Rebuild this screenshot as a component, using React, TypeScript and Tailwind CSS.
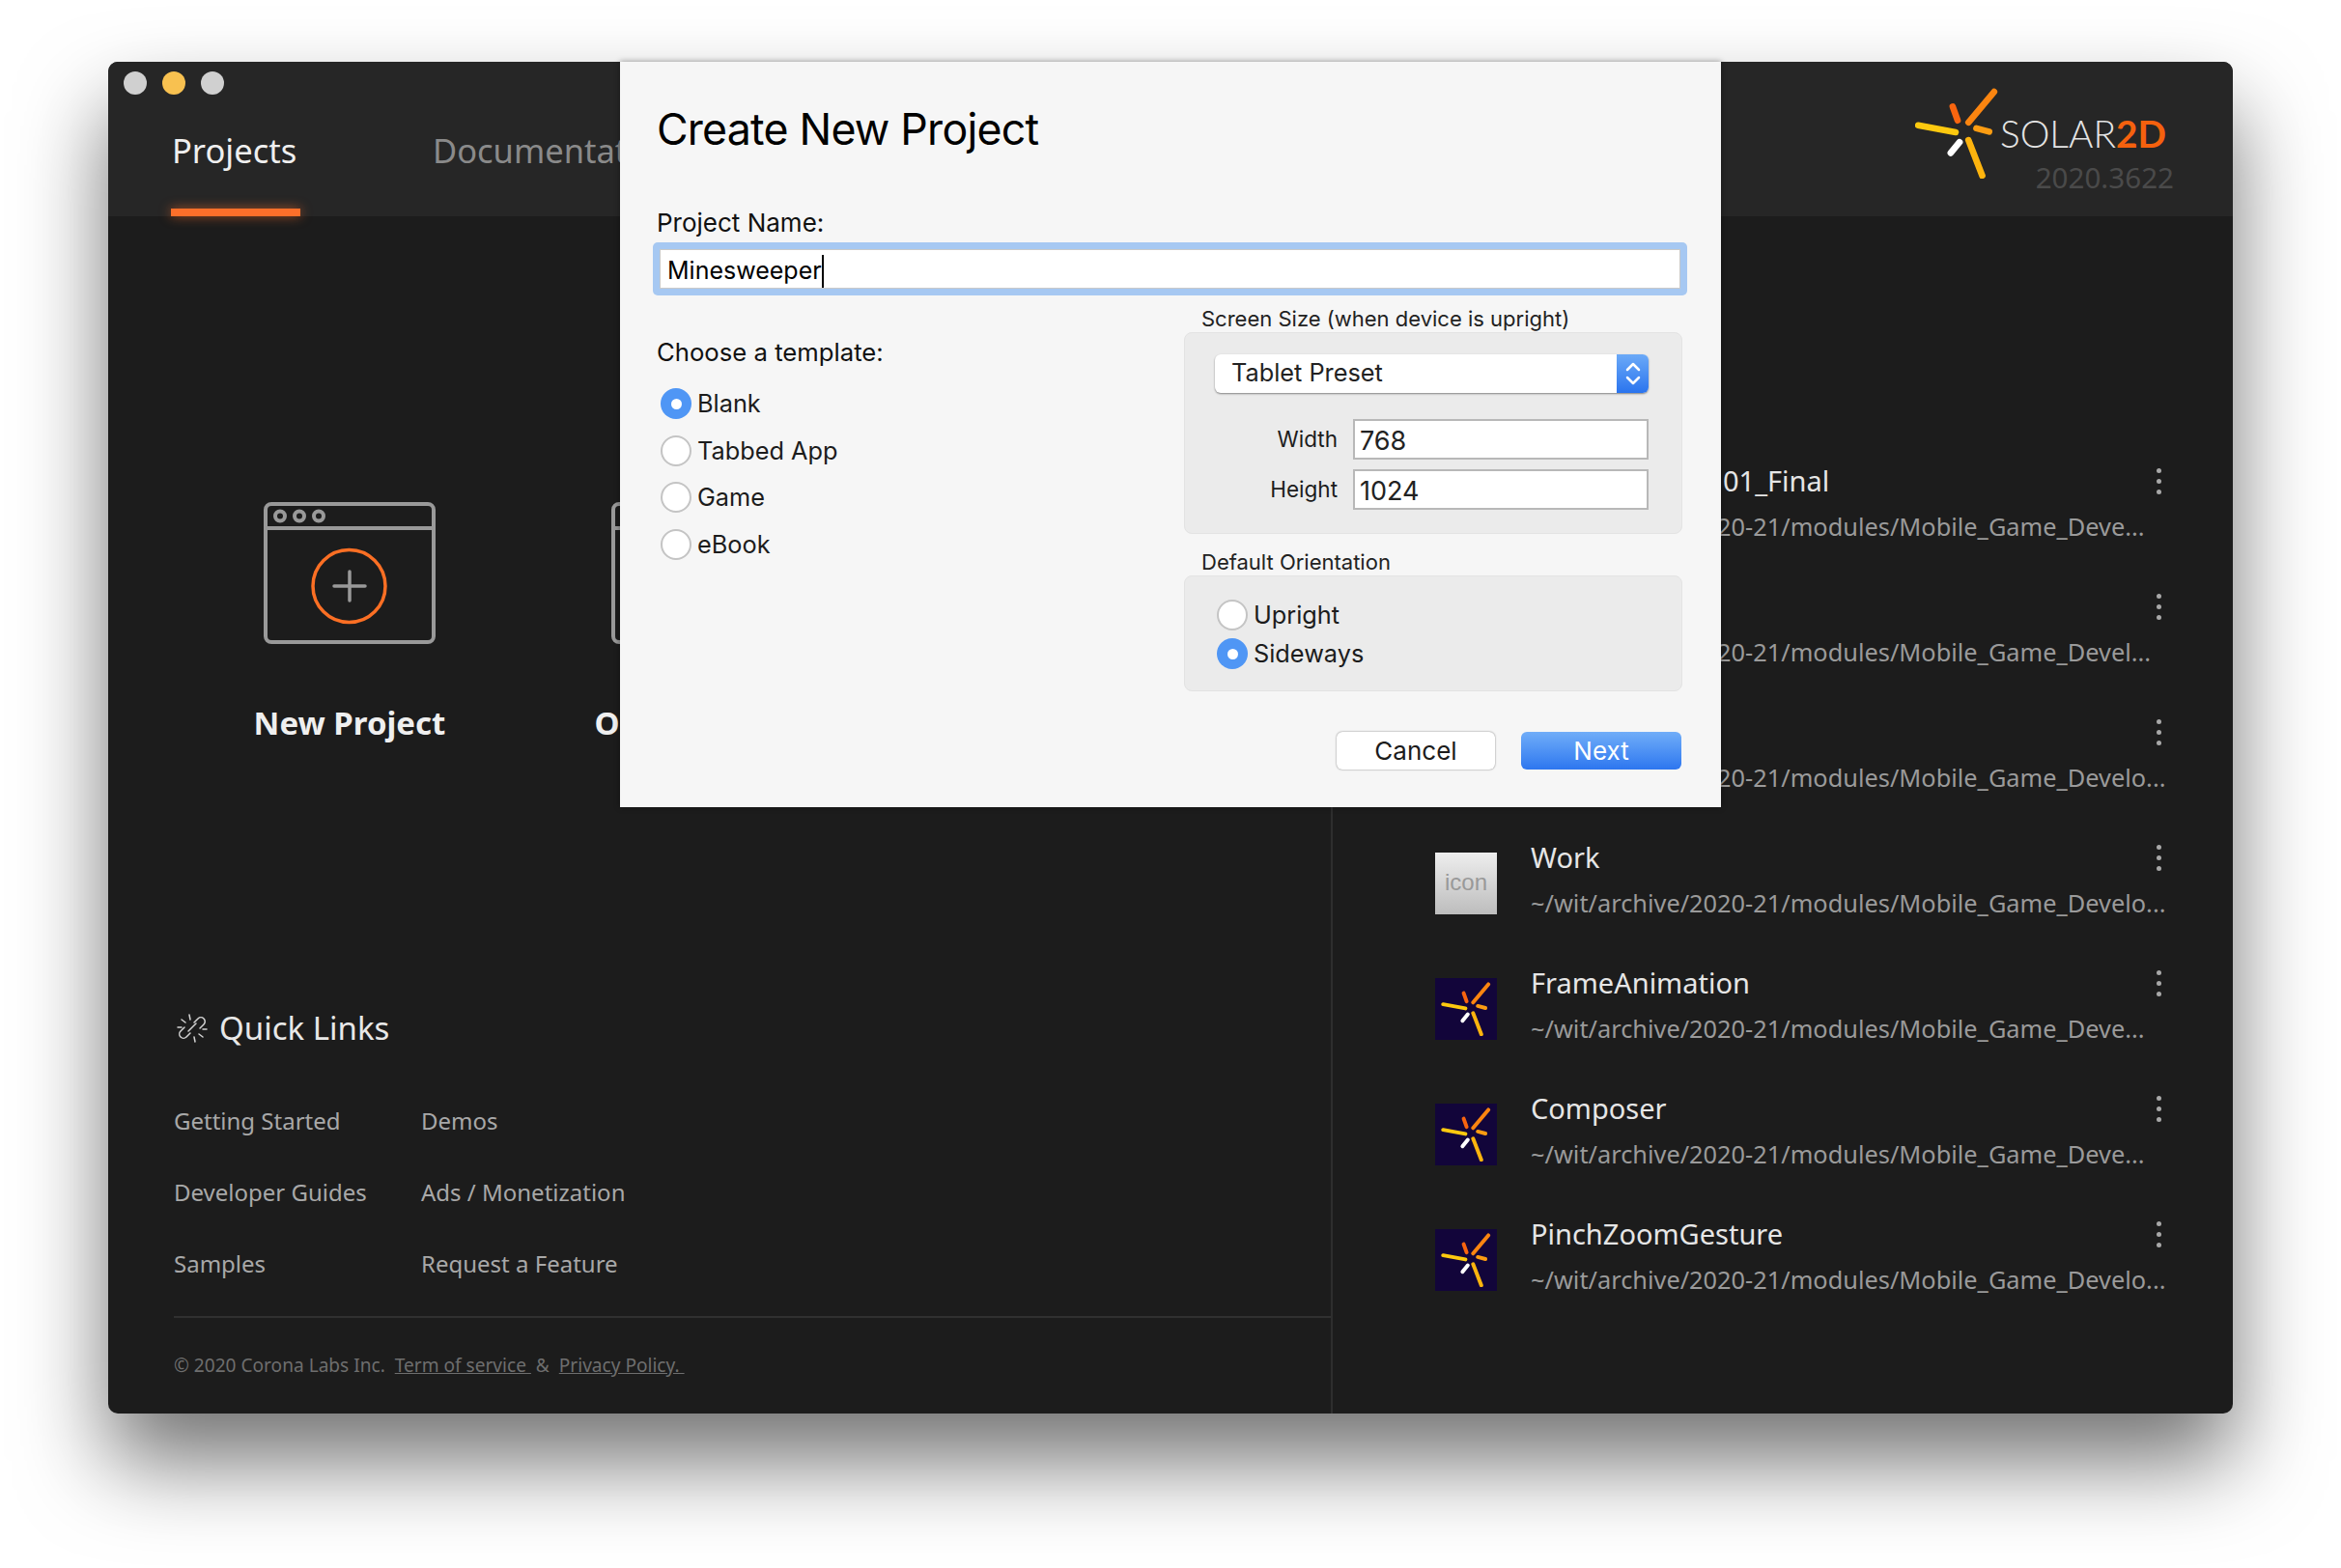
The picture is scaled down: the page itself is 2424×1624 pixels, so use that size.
import React from "react";

const uiFont = "font-['Noto_Sans',sans-serif]";
const macFont = "font-['Inter','Liberation_Sans',sans-serif]";

const projects = [
  { name: "01_Final", offset: true, path: "~/wit/archive/2020-21/modules/Mobile_Game_Deve...", icon: "solar" },
  { name: "", path: "~/wit/archive/2020-21/modules/Mobile_Game_Devel...", icon: "solar" },
  { name: "", path: "~/wit/archive/2020-21/modules/Mobile_Game_Develo...", icon: "solar" },
  { name: "Work", path: "~/wit/archive/2020-21/modules/Mobile_Game_Develo...", icon: "plain" },
  { name: "FrameAnimation", path: "~/wit/archive/2020-21/modules/Mobile_Game_Deve...", icon: "solar" },
  { name: "Composer", path: "~/wit/archive/2020-21/modules/Mobile_Game_Deve...", icon: "solar" },
  { name: "PinchZoomGesture", path: "~/wit/archive/2020-21/modules/Mobile_Game_Develo...", icon: "solar" },
];

function SolarMark({ className }: { className?: string }) {
  return (
    <svg viewBox="0 0 84 92" className={className} fill="none" strokeLinecap="round" strokeWidth="6.5">
      <path d="M80 4 54 35" stroke="#fb8510" />
      <path d="M38 19l5 14" stroke="#f9650f" />
      <path d="M3 38l38 7" stroke="#fdc90f" />
      <path d="M62 41l13 3.4" stroke="#fb9c12" />
      <path d="M45 55l-9 11" stroke="#ffffff" />
      <path d="M54 53l14 36" stroke="#fdb40e" />
    </svg>
  );
}

function WindowIcon({ plus }: { plus?: boolean }) {
  return (
    <svg width="178" height="147" viewBox="0 0 178 147" fill="none" stroke="#999" strokeWidth="4">
      <rect x="2" y="2" width="174" height="143" rx="6" />
      <path d="M2 27h174" />
      <circle cx="17" cy="14.5" r="5" />
      <circle cx="37" cy="14.5" r="5" />
      <circle cx="57" cy="14.5" r="5" />
      {plus && <circle cx="88.500" cy="87" r="37.500" stroke="#fb6f24" strokeWidth="3.500" />}
      {plus && <path d="M89 72v30M73 87h32" strokeWidth="3.500" strokeLinecap="round" />}
    </svg>
  );
}

function Radio({ checked }: { checked?: boolean }) {
  return checked ? (
    <span className="flex h-[32px] w-[32px] items-center justify-center rounded-full bg-[#4f96f5]">
      <span className="h-[11px] w-[11px] rounded-full bg-white" />
    </span>
  ) : (
    <span className="h-[32px] w-[32px] rounded-full border-2 border-[#c4c4c4] bg-white" />
  );
}

function RadioRow({ label, checked }: { label: string; checked?: boolean }) {
  return (
    <div className="flex items-center gap-[6px] text-[25.300px] leading-[32px] text-[#1c1c1c]">
      <Radio checked={checked} />
      <span>{label}</span>
    </div>
  );
}

function SizeField({ label, value }: { label: string; value: string }) {
  return (
    <div className="flex items-center">
      <span className="w-[128px] pr-[16px] text-right text-[22.500px] text-[#1c1c1c]">{label}</span>
      <div className="flex h-[42px] w-[306px] items-center border-2 border-[#b8b8b8] bg-white pl-[5px] pt-[4px] text-[27px] text-[#222]">
        {value}
      </div>
    </div>
  );
}

function CreateProjectDialog() {
  return (
    <div className={`absolute left-[530px] top-0 h-[772px] w-[1140px] bg-[#f6f6f6] pl-[38px] pr-[39px] pt-[42px] shadow-[0_0_6px_rgba(0,0,0,0.4)] ${macFont}`}>
      <h1 className="text-[44.700px] leading-[56px] tracking-[-0.8px] text-black">Create New Project</h1>
      <p className="mt-[53px] text-[26px] leading-[32px] text-[#111]">Project Name:</p>
      <div className="-ml-[4px] mt-[4px] flex h-[55px] w-[1071px] rounded-[5px] bg-[#a6c8f2] p-[7px]">
        <div className="flex flex-1 items-center border border-[#c9c9c9] bg-white pl-[7px] pt-[5px] text-[25px] text-black">
          Minesweeper
          <span className="h-[34px] w-[2px] bg-black" />
        </div>
      </div>
      <div className="mt-[1px] flex">
        <div className="w-[546px] pt-[42px]">
          <p className="text-[25.700px] leading-[32px] text-[#111]">Choose a template:</p>
          <div className="ml-[4px] mt-[21px] flex flex-col gap-[16.500px]">
            <RadioRow label="Blank" checked />
            <RadioRow label="Tabbed App" />
            <RadioRow label="Game" />
            <RadioRow label="eBook" />
          </div>
        </div>
        <div className="w-[516px]">
          <p className="ml-[18px] mt-[9px] text-[22px] leading-[28px] text-[#222]">Screen Size (when device is upright)</p>
          <div className="h-[209px] rounded-[8px] border border-[#e3e3e3] bg-[#ebebeb] pl-[31px] pt-[22px]">
            <div className="flex h-[40px] w-[449px] overflow-hidden rounded-[6px] bg-white shadow-[0_1px_2px_rgba(0,0,0,0.45)]">
              <span className="flex-1 pl-[17px] text-[25.300px] leading-[38px] text-[#222]">Tablet Preset</span>
              <span className="flex w-[33px] flex-col items-center justify-center bg-gradient-to-b from-[#6ba9f7] to-[#2a74ee] text-white">
                <svg width="18" height="30" viewBox="0 0 18 30" fill="none" stroke="white" strokeWidth="2.500" strokeLinecap="round" strokeLinejoin="round">
                  <path d="M3 11l6-6 6 6M3 19l6 6 6-6" />
                </svg>
              </span>
            </div>
            <div className="ml-[15px] mt-[27px] flex flex-col gap-[10px]">
              <SizeField label="Width" value="768" />
              <SizeField label="Height" value="1024" />
            </div>
          </div>
          <p className="ml-[18px] mt-[15px] text-[22px] leading-[28px] text-[#222]">Default Orientation</p>
          <div className="flex h-[120px] flex-col gap-[8px] rounded-[8px] border border-[#e3e3e3] bg-[#ebebeb] pl-[33px] pt-[24px]">
            <RadioRow label="Upright" />
            <RadioRow label="Sideways" checked />
          </div>
          <div className="mt-[42px] flex justify-end gap-[27px] pr-[1px] text-[26px]">
            <button className="h-[39px] w-[164px] rounded-[6px] bg-white text-[#1c1c1c] shadow-[0_0_2px_rgba(0,0,0,0.55)]">Cancel</button>
            <button className="h-[39px] w-[166px] rounded-[6px] bg-gradient-to-b from-[#70adf8] to-[#2d76ef] text-white">Next</button>
          </div>
        </div>
      </div>
    </div>
  );
}

function ProjectRow({ project }: { project: (typeof projects)[number] }) {
  return (
    <div className="relative flex h-[130px] gap-[35px]">
      {project.icon === "solar" ? (
        <div className="mt-[13px] flex h-[64px] w-[64px] items-center justify-center bg-[#12053a]">
          <SolarMark className="h-[56px] w-[52px]" />
        </div>
      ) : (
        <div className="mt-[13px] flex h-[64px] w-[64px] items-center justify-center bg-gradient-to-b from-[#eeeeee] to-[#bdbdbd] pb-[3px] font-['Liberation_Sans',sans-serif] text-[24px] text-[#999]">
          icon
        </div>
      )}
      <div className="min-w-0 flex-1">
        <p className={`-mt-[3px] h-[42px] text-[29px] leading-[42px] text-[#e6e6e6] ${project.offset ? "pl-[199px]" : ""}`}>{project.name}</p>
        <p className="mt-[8px] whitespace-nowrap text-[25.350px] leading-[36px] text-[#9a9a9a]">{project.path}</p>
      </div>
      <div className="absolute right-[74px] top-[5px] flex flex-col gap-[6px]">
        <span className="h-[5px] w-[5px] rounded-full bg-[#a8a8a8]" />
        <span className="h-[5px] w-[5px] rounded-full bg-[#a8a8a8]" />
        <span className="h-[5px] w-[5px] rounded-full bg-[#a8a8a8]" />
      </div>
    </div>
  );
}

export default function App() {
  return (
    <div className="min-h-[1624px] w-[2424px] overflow-hidden bg-white pl-[112px] pt-[64px]">
      <div className={`relative h-[1400px] w-[2200px] rounded-[10px] bg-[#1c1c1c] shadow-[0_50px_90px_rgba(0,0,0,0.55)] ${uiFont}`}>
        <header className="flex h-[160px] justify-between rounded-t-[10px] bg-[#262626]">
          <div className="flex flex-col">
            <div className="flex gap-[16px] pl-[16px] pt-[10px]">
              <span className="h-[24px] w-[24px] rounded-full bg-[#d0d0d0]" />
              <span className="h-[24px] w-[24px] rounded-full bg-[#f8c150]" />
              <span className="h-[24px] w-[24px] rounded-full bg-[#d0d0d0]" />
            </div>
            <nav className="mt-[35px] flex pl-[65px] text-[34.500px] leading-[46px]">
              <div className="flex w-[134px] flex-col text-[#efefef]">
                <span className="pl-[1px]">Projects</span>
                <span className="mt-[37px] h-[8px] bg-[#fd6f2a] shadow-[0_0_12px_rgba(253,111,42,0.6)]" />
              </div>
              <div className="ml-[137px] text-[#8a8a8a]">Documentation</div>
            </nav>
          </div>
          <div className="flex pr-[61px] pt-[27px]">
            <SolarMark className="mr-[2px] h-[94px] w-[86px]" />
            <div className="flex flex-col items-end">
              <p className="mr-[8px] mt-[27px] font-['Lato',sans-serif] text-[38.800px] font-light leading-[40px] text-[#e4e4e4]">
                SOLAR<span className="font-bold text-[#f5610e]">2D</span>
              </p>
              <p className="mt-[7px] text-[29.600px] leading-[38px] text-[#4a4a4a]">2020.3622</p>
            </div>
          </div>
        </header>

        <div className="flex h-[1240px]">
          <section className="flex w-[1268px] flex-col border-r-2 border-[#2e2e2e] pl-[68px]">
            <div className="flex pl-[2px] pt-[296px]">
              <div className="flex w-[360px] flex-col items-center">
                <WindowIcon plus />
                <p className="mt-[59px] text-[33px] font-bold leading-[46px] text-[#efefef]">New Project</p>
              </div>
              <div className="flex w-[360px] flex-col items-center">
                <WindowIcon />
                <p className="mt-[59px] text-[33px] font-bold leading-[46px] text-[#efefef]">Open Project</p>
              </div>
            </div>
            <div className="ml-[3px] mt-[270px] flex items-center gap-[12px]">
              <svg width="32" height="32" viewBox="0 0 32 32" fill="none" stroke="#d4d4d4" strokeWidth="1.500" strokeLinecap="round">
                <path d="M14 21l-4 4a4 4 0 0 1-6-6l4-4M18 10l4-4a4 4 0 0 1 6 6l-4 4M12 19l8-8" />
                <path d="M13 2l1 5M5 7l4 3M1 15h4M19 30l-1-5M27 25l-4-3M31 17h-4" />
              </svg>
              <h2 className="text-[33px] leading-[46px] text-[#e8e8e8]">Quick Links</h2>
            </div>
            <div className="mt-[55px] grid w-[600px] grid-cols-[256px_1fr] gap-y-[38px] text-[24px] leading-[36px] text-[#a8a8a8]">
              <a>Getting Started</a>
              <a>Demos</a>
              <a>Developer Guides</a>
              <a>Ads / Monetization</a>
              <a>Samples</a>
              <a>Request a Feature</a>
            </div>
            <div className="mt-[36px] border-t-2 border-[#303030] pt-[34px] text-[19.100px] leading-[30px] text-[#6e6e6e]">
              © 2020 Corona Labs Inc.&nbsp; <a className="underline">Term of service&nbsp;</a> &amp;&nbsp; <a className="underline">Privacy Policy.&nbsp;</a>
            </div>
          </section>

          <section className="flex-1 pl-[106px] pt-[256px]">
            {projects.map((project, i) => (
              <ProjectRow key={i} project={project} />
            ))}
          </section>
        </div>

        <CreateProjectDialog />
      </div>
    </div>
  );
}
